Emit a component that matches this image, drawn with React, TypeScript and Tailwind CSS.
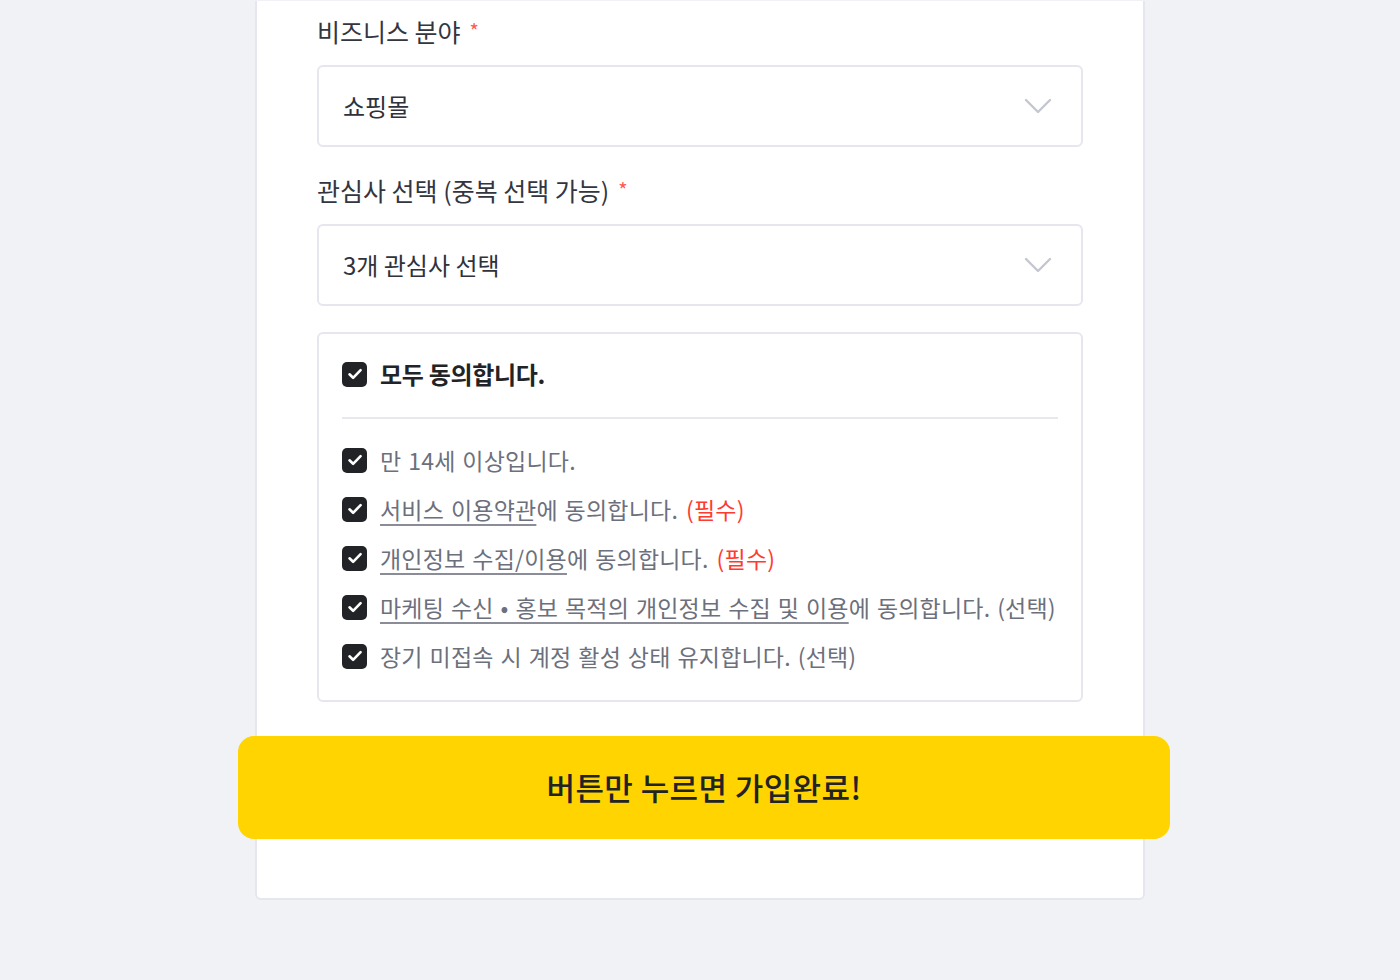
import React from 'react';

const font = { fontFamily: '"Noto Sans CJK KR", "Noto Sans", sans-serif' };

function Chevron() {
  return (
    <svg width="28" height="16" viewBox="0 0 28 16" fill="none" className="text-[#c5c7ce]">
      <path d="M2 2l12 12L26 2" stroke="currentColor" strokeWidth="2.4" strokeLinecap="round" strokeLinejoin="round" />
    </svg>
  );
}

function Check() {
  return (
    <span className="flex h-[25px] w-[25px] shrink-0 items-center justify-center rounded-[5px] bg-[#222326]">
      <svg width="18" height="18" viewBox="0 0 18 18" fill="none">
        <path d="M3.5 9.3l3.6 3.5L14.6 5.2" stroke="white" strokeWidth="2.6" strokeLinecap="round" strokeLinejoin="round" />
      </svg>
    </span>
  );
}

function Label({ children }: { children: React.ReactNode }) {
  return (
    <div className="mb-[17px] flex h-[34px] items-center text-[25px] leading-[34px] text-[#33363f]">
      {children}
      <span className="ml-[9px] text-[20px] text-[#ff5a4e]">*</span>
    </div>
  );
}

function Select({ value }: { value: string }) {
  return (
    <div className="flex h-[82px] items-center justify-between rounded-[6px] border-2 border-[#e6e7ee] bg-white pl-[24px] pr-[29px]">
      <span className="text-[24px] text-[#2f323a]">{value}</span>
      <Chevron />
    </div>
  );
}

const U = ({ children }: { children: React.ReactNode }) => (
  <span className="underline decoration-[#8a8d98] decoration-[1.5px] underline-offset-[5px]">{children}</span>
);

const Req = () => <span className="ml-[8px] text-[#ff3b2f]">(필수)</span>;

const items: React.ReactNode[] = [
  <>만 14세 이상입니다.</>,
  <>
    <U>서비스 이용약관</U>에 동의합니다.
    <Req />
  </>,
  <>
    <U>개인정보 수집/이용</U>에 동의합니다.
    <Req />
  </>,
  <>
    <U>마케팅 수신 • 홍보 목적의 개인정보 수집 및 이용</U>에 동의합니다. (선택)
  </>,
  <>장기 미접속 시 계정 활성 상태 유지합니다. (선택)</>,
];

export default function App() {
  return (
    <div className="min-h-[980px] w-full bg-[#f1f2f6] pt-[1px]" style={font}>
      <div className="mx-auto w-[890px] rounded-b-[6px] border-x-2 border-b-2 border-[#e6e7ee] bg-white px-[60px] pb-[59px] pt-[13px]">
        <Label>비즈니스 분야</Label>
        <Select value="쇼핑몰" />

        <div className="mt-[26px]">
          <Label>관심사 선택 (중복 선택 가능)</Label>
          <Select value="3개 관심사 선택" />
        </div>

        <div className="mt-[26px] rounded-[6px] border-2 border-[#e6e7ee] px-[23px] pb-[27px] pt-[23px]">
          <div className="flex h-[34px] items-center gap-[13px]">
            <Check />
            <span className="text-[24px] font-bold tracking-[-0.3px] text-[#222326]">모두 동의합니다.</span>
          </div>
          <div className="mt-[26px] h-[2px] bg-[#e8e9ee]" />
          <div className="mt-[24px] flex flex-col gap-[15px]">
            {items.map((it, i) => (
              <div key={i} className="flex h-[34px] items-center gap-[13px]">
                <Check />
                <span className="whitespace-nowrap text-[23px] tracking-[0.2px] text-[#6c707c] [word-spacing:1.5px]">{it}</span>
              </div>
            ))}
          </div>
        </div>

        <button className="-ml-[79px] mt-[34px] flex h-[103px] w-[932px] items-center justify-center rounded-[16px] bg-[#ffd400] text-[31px] font-medium tracking-[0.4px] text-[#222326]">
          버튼만 누르면 가입완료!
        </button>
      </div>
    </div>
  );
}
